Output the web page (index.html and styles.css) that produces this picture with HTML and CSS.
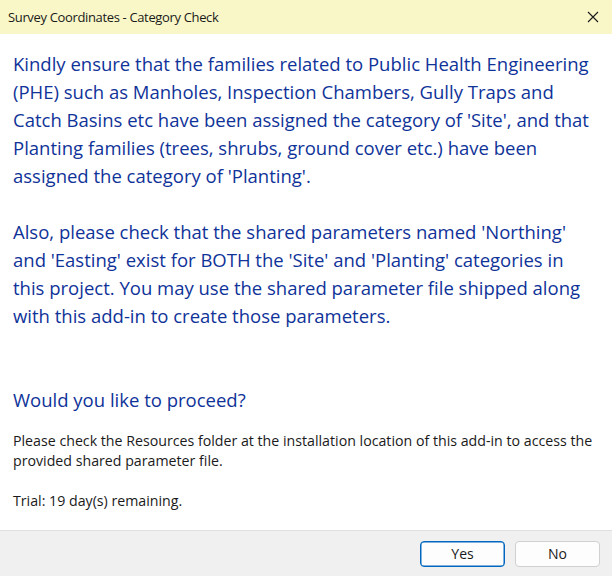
FILE: index.html
```html
<!DOCTYPE html>
<html>
<head>
<meta charset="utf-8">
<link rel="stylesheet" href="styles.css">
</head>
<body>
<div class="dialog">
  <div class="titlebar">
    <span class="title">Survey Coordinates - Category Check</span>
    <svg class="close" width="12" height="12" viewBox="0 0 12 12"><path d="M1 1 L11 11 M11 1 L1 11" stroke="#1a1a1a" stroke-width="1.1" fill="none"/></svg>
  </div>
  <div class="content">
    <p class="main">Kindly ensure that the families related to Public Health Engineering<br>(PHE) such as Manholes, Inspection Chambers, Gully Traps and<br>Catch Basins etc have been assigned the category of 'Site', and that<br>Planting families (trees, shrubs, ground cover etc.) have been<br>assigned the category of 'Planting'.<br><br>Also, please check that the shared parameters named 'Northing'<br>and 'Easting' exist for BOTH the 'Site' and 'Planting' categories in<br>this project. You may use the shared parameter file shipped along<br>with this add-in to create those parameters.<br><br><br>Would you like to proceed?</p>
    <p class="note">Please check the Resources folder at the installation location of this add-in to access the<br>provided shared parameter file.<br><br>Trial: 19 day(s) remaining.</p>
  </div>
  <div class="footer">
    <button class="btn default">Yes</button>
    <button class="btn">No</button>
  </div>
</div>
</body>
</html>
```
FILE: styles.css
```css
html, body {
  margin: 0;
  padding: 0;
  width: 612px;
  height: 576px;
  overflow: hidden;
  background: #ffffff;
}
.dialog {
  display: flex;
  flex-direction: column;
  width: 612px;
  height: 576px;
  font-family: "Open Sans", "Noto Sans", sans-serif;
}
.titlebar {
  height: 34px;
  flex: none;
  background: #f9f7c8;
  display: flex;
  align-items: center;
  justify-content: space-between;
  padding: 0 13px 0 8px;
}
.title {
  font-size: 13px;
  letter-spacing: -0.35px;
  color: #1a1a1a;
}
.content {
  flex: 1;
  padding: 16px 13px 0 13px;
}
.main {
  margin: 0;
  font-size: 18.5px;
  line-height: 28px;
  color: #0f3399;
  white-space: nowrap;
}
.note {
  margin: 17px 0 0 0;
  font-size: 14.2px;
  line-height: 20px;
  color: #1a1a1a;
  white-space: nowrap;
}
.footer {
  height: 45px;
  flex: none;
  background: #f0f0f0;
  border-top: 1px solid #dfdfdf;
  display: flex;
  align-items: center;
  justify-content: flex-end;
  gap: 10px;
  padding: 0 12px 0 0;
}
.btn {
  width: 85px;
  height: 26px;
  background: #fdfdfd;
  border: 1px solid #d0d0d0;
  border-radius: 4px;
  font-family: inherit;
  font-size: 14px;
  color: #1a1a1a;
  padding: 0;
}
.btn.default {
  border: 1px solid #0067c0;
  box-shadow: inset 0 0 0 0.5px #0067c0;
}
```
